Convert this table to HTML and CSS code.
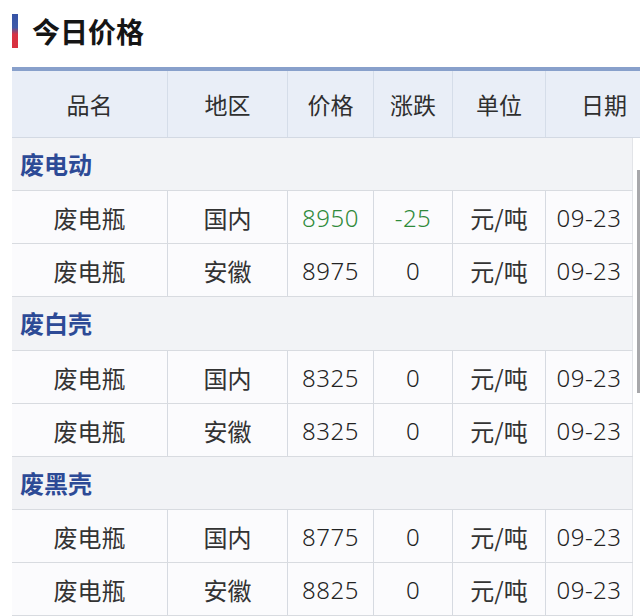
FILE: index.html
```html
<!DOCTYPE html>
<html lang="zh-CN">
<head>
<meta charset="utf-8">
<title>今日价格</title>
<link rel="stylesheet" href="styles.css">
</head>
<body>
<div class="title">
  <span class="title-bar"></span>
  <h1 class="title-text">今日价格</h1>
</div>
<div class="price-table">
  <div class="row head">
    <div class="cell">品名</div>
    <div class="cell">地区</div>
    <div class="cell">价格</div>
    <div class="cell">涨跌</div>
    <div class="cell">单位</div>
    <div class="cell date-head">日期</div>
  </div>
  <div class="body-wrap">
    <div class="rows">
      <div class="row cat"><div class="cat-name">废电动</div></div>
      <div class="row data">
        <div class="cell">废电瓶</div><div class="cell">国内</div><div class="cell num up">8950</div><div class="cell num up">-25</div><div class="cell">元/吨</div><div class="cell num">09-23</div>
      </div>
      <div class="row data">
        <div class="cell">废电瓶</div><div class="cell">安徽</div><div class="cell num">8975</div><div class="cell num">0</div><div class="cell">元/吨</div><div class="cell num">09-23</div>
      </div>
      <div class="row cat tall"><div class="cat-name">废白壳</div></div>
      <div class="row data">
        <div class="cell">废电瓶</div><div class="cell">国内</div><div class="cell num">8325</div><div class="cell num">0</div><div class="cell">元/吨</div><div class="cell num">09-23</div>
      </div>
      <div class="row data">
        <div class="cell">废电瓶</div><div class="cell">安徽</div><div class="cell num">8325</div><div class="cell num">0</div><div class="cell">元/吨</div><div class="cell num">09-23</div>
      </div>
      <div class="row cat"><div class="cat-name">废黑壳</div></div>
      <div class="row data">
        <div class="cell">废电瓶</div><div class="cell">国内</div><div class="cell num">8775</div><div class="cell num">0</div><div class="cell">元/吨</div><div class="cell num">09-23</div>
      </div>
      <div class="row data">
        <div class="cell">废电瓶</div><div class="cell">安徽</div><div class="cell num">8825</div><div class="cell num">0</div><div class="cell">元/吨</div><div class="cell num">09-23</div>
      </div>
    </div>
    <div class="gutter"><div class="thumb"></div></div>
  </div>
</div>
</body>
</html>
```

FILE: styles.css
```css
* { box-sizing: border-box; }
html, body {
  margin: 0;
  padding: 0;
  background: #ffffff;
  font-family: "Noto Sans CJK SC", "Noto Sans", sans-serif;
  color: #333333;
  overflow: hidden;
}
.title {
  display: flex;
  align-items: center;
  height: 67px;
  padding: 1px 0 6px 12px;
}
.title-bar {
  width: 6px;
  height: 34px;
  background: linear-gradient(to bottom, #3553a6 0%, #3f5aa8 40%, #d73344 60%, #d9303f 100%);
}
.title-text {
  margin: 0 0 0 14px;
  font-size: 28px;
  font-weight: 700;
  color: #151515;
  line-height: 1;
}
.price-table {
  margin-left: 12px;
  border-top: 4px solid #88a0cb;
}
.row {
  display: grid;
  grid-template-columns: 156px 120px 86px 79px 93px 87px;
}
.head {
  grid-template-columns: 156px 120px 86px 79px 93px 94px;
  height: 67px;
  background: #e9eef7;
  border-bottom: 1px solid #d3d9e3;
}
.cell {
  display: flex;
  align-items: center;
  justify-content: center;
  font-size: 24px;
  font-weight: 400;
  color: #333333;
  border-right: 1px solid #d6dae1;
}
.num {
  font-family: "Noto Sans", "Noto Sans CJK SC", sans-serif;
  letter-spacing: 0.5px;
  font-weight: 300;
  color: #222222;
}
.head .cell {
  font-size: 23px;
  color: #2f2f2f;
  border-right-color: #d5dde9;
}
.head .date-head {
  border-right: none;
  padding-left: 22px;
}
.body-wrap {
  display: flex;
}
.rows {
  width: 621px;
}
.data {
  height: 53px;
  background: #fbfbfd;
  border-bottom: 1px solid #d8dbe0;
}
.data .cell:last-child {
  border-right: 1px solid #e2e4e8;
}
.cat {
  display: block;
  height: 53px;
  background: #f2f3f6;
  border-bottom: 1px solid #d8dbe0;
  border-right: 1px solid #e2e4e8;
}
.cat.tall {
  height: 54px;
}
.cat-name {
  padding: 11px 0 0 8px;
  font-size: 24px;
  font-weight: 700;
  color: #2d4a96;
  line-height: 30px;
}
.num.up {
  color: #2f8a3a;
}
.gutter {
  width: 7px;
  background: #ffffff;
  display: flex;
  justify-content: flex-end;
}
.thumb {
  width: 3px;
  height: 223px;
  margin-top: 32px;
  background: #a8a8ab;
}
```
